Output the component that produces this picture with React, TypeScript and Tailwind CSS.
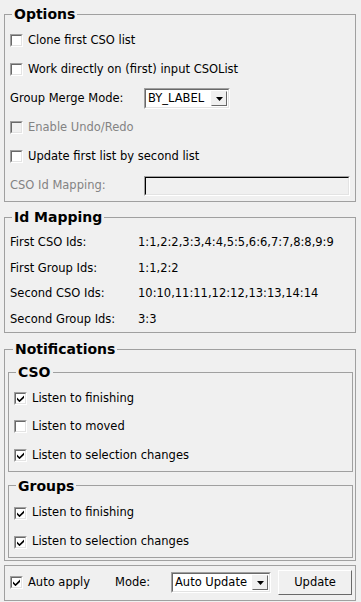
const font = "font-['DejaVu_Sans',sans-serif]";

const Check = ({ checked, disabled }: { checked?: boolean; disabled?: boolean }) => (
  <span className="flex w-[13px] h-[13px] shrink-0 border border-t-[#a0a0a0] border-l-[#a0a0a0] border-b-white border-r-white">
    <span
      className={`flex w-full h-full items-center justify-center border border-t-[#696969] border-l-[#696969] border-b-[#e3e3e3] border-r-[#e3e3e3] ${
        disabled ? "bg-[#f0f0f0]" : "bg-white"
      }`}
    >
      {checked && (
        <svg width="7" height="7" viewBox="0 0 7 7">
          <path d="M0 2.5 L2.5 5 L7 0.5 L7 3 L2.5 7.2 L0 4.7 Z" fill="#000" />
        </svg>
      )}
    </span>
  </span>
);

const CheckRow = ({ label, checked, disabled, h = "h-[29px]" }: { label: string; checked?: boolean; disabled?: boolean; h?: string }) => (
  <div className={`flex items-center gap-[5px] ${h}`}>
    <Check checked={checked} disabled={disabled} />
    <span className={disabled ? "text-[#838383]" : "text-black"}>{label}</span>
  </div>
);

const Arrow = () => (
  <span className="flex items-center justify-center w-[16px] h-full bg-[#f0f0f0] border border-t-[#f0f0f0] border-l-[#f0f0f0] border-b-[#696969] border-r-[#696969]">
    <svg width="7" height="4" viewBox="0 0 7 4">
      <path d="M0 0 H7 L3.5 4 Z" fill="#000" />
    </svg>
  </span>
);

const Combo = ({ value, w }: { value: string; w: string }) => (
  <div className={`flex h-[21px] ${w} border border-t-[#a0a0a0] border-l-[#a0a0a0] border-b-white border-r-white`}>
    <div className="flex flex-1 items-stretch bg-white border border-t-[#696969] border-l-[#696969] border-b-[#e3e3e3] border-r-[#e3e3e3] p-[1px]">
      <span className="flex-1 flex items-center pl-[1px] text-black">{value}</span>
      <Arrow />
    </div>
  </div>
);

const Legend = ({ title, ml }: { title: string; ml: string }) => (
  <legend className={`${ml} px-[2px] text-[14px] leading-[18px] font-bold text-black`}>{title}</legend>
);

export default function App() {
  return (
    <div className={`w-[361px] h-[602px] bg-[#f0f0f0] pl-[4px] pr-[5px] pt-[5px] text-[11.5px] ${font} text-black`}>
      <fieldset className="border border-[#a0a0a0] pl-[5px] pr-[5px] pt-[3px] pb-[1px]">
        <Legend title="Options" ml="ml-[2px]" />
        <CheckRow label="Clone first CSO list" />
        <CheckRow label="Work directly on (first) input CSOList" />
        <div className="flex items-center h-[29px]">
          <span className="w-[134px]">Group Merge Mode:</span>
          <Combo value="BY_LABEL" w="w-[86px]" />
        </div>
        <CheckRow label="Enable Undo/Redo" disabled />
        <CheckRow label="Update first list by second list" />
        <div className="flex items-center h-[29px]">
          <span className="w-[134px] text-[#838383]">CSO Id Mapping:</span>
          <div className="flex h-[20px] w-[206px] border border-t-[#a0a0a0] border-l-[#a0a0a0] border-b-white border-r-white">
            <div className="flex-1 bg-[#f0f0f0] border border-t-[#000] border-l-[#000] border-b-[#e3e3e3] border-r-[#e3e3e3]" />
          </div>
        </div>
      </fieldset>

      <fieldset className="mt-[6px] border border-[#a0a0a0] pl-[5px] pr-[5px] pt-[4px]">
        <Legend title="Id Mapping" ml="ml-[2px]" />
        {[
          ["First CSO Ids:", "1:1,2:2,3:3,4:4,5:5,6:6,7:7,8:8,9:9"],
          ["First Group Ids:", "1:1,2:2"],
          ["Second CSO Ids:", "10:10,11:11,12:12,13:13,14:14"],
          ["Second Group Ids:", "3:3"],
        ].map(([k, v]) => (
          <div key={k} className="flex items-center h-[25.5px]">
            <span className="w-[128px]">{k}</span>
            <span>{v}</span>
          </div>
        ))}
      </fieldset>

      <fieldset className="mt-[7px] border border-[#a0a0a0] pl-[3px] pr-[2px] pb-[2px]">
        <Legend title="Notifications" ml="ml-[5px]" />
        <fieldset className="mt-[5px] border border-[#a0a0a0] pl-[5px] pt-[3px] pb-[1px]">
          <Legend title="CSO" ml="ml-[2px]" />
          <CheckRow label="Listen to finishing" checked h="h-[28.5px]" />
          <CheckRow label="Listen to moved" h="h-[28.5px]" />
          <CheckRow label="Listen to selection changes" checked h="h-[28.5px]" />
        </fieldset>
        <fieldset className="mt-[5px] border border-[#a0a0a0] pl-[5px] pt-[4px]">
          <Legend title="Groups" ml="ml-[2px]" />
          <CheckRow label="Listen to finishing" checked />
          <CheckRow label="Listen to selection changes" checked />
        </fieldset>
      </fieldset>

      <div className="mt-[4px] h-[36px] border border-[#a0a0a0] flex items-center pl-[5px]">
        <Check checked />
        <span className="ml-[5px] w-[87px]">Auto apply</span>
        <span className="w-[56px]">Mode:</span>
        <Combo value="Auto Update" w="w-[100px]" />
        <button className="ml-[7px] h-[25px] w-[74px] bg-[#f0f0f0] border border-t-white border-l-white border-b-[#696969] border-r-[#696969] text-black">
          Update
        </button>
      </div>
    </div>
  );
}
